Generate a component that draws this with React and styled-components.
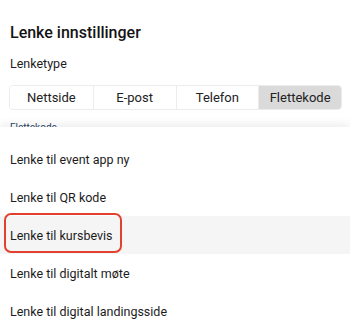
import React from 'react'
import styled, { createGlobalStyle } from 'styled-components'

const GlobalStyle = createGlobalStyle`
  body {
    margin: 0;
    background: #fff;
    font-family: Roboto, "Noto Sans", sans-serif;
    color: #1f1f1f;
  }
`

const Page = styled.div`
  position: relative;
  width: 350px;
  height: 330px;
  overflow: hidden;
  padding: 21px 8px 0 9px;
  box-sizing: border-box;
`

const Title = styled.h2`
  margin: 0 0 0 1px;
  font-size: 16px;
  font-weight: 500;
  line-height: 24px;
  color: #141414;
`

const Label = styled.div`
  margin: 10px 0 0 1px;
  font-size: 12.5px;
  line-height: 18px;
  color: #1c1c1c;
`

const Segmented = styled.div`
  margin-top: 12px;
  display: grid;
  grid-template-columns: repeat(4, 1fr);
  height: 25px;
  border: 1px solid #ececec;
  border-radius: 4px;
  box-sizing: border-box;
  overflow: hidden;
`

const Segment = styled.div`
  display: flex;
  align-items: center;
  justify-content: center;
  font-size: 13px;
  color: #222;
  background: ${p => (p.$active ? '#dadada' : '#fff')};
  border-left: ${p => (p.$first ? 'none' : '1px solid #ececec')};
`

const FieldLabel = styled.div`
  margin: 12px 0 0 1px;
  font-size: 10px;
  line-height: 12px;
  color: #2a3f66;
`

const Menu = styled.ul`
  position: absolute;
  left: 0;
  right: 0;
  top: 127px;
  bottom: 0;
  margin: 0;
  padding: 13px 0 0;
  list-style: none;
  background: #fff;
  box-shadow: 0 -3px 8px rgba(0, 0, 0, 0.07);
`

const Item = styled.li`
  position: relative;
  height: 38px;
  display: flex;
  align-items: center;
  padding-left: 10px;
  font-size: 12.5px;
  color: #1c1c1c;
  background: ${p => (p.$hover ? '#f5f5f5' : 'transparent')};
`

const Highlight = styled.span`
  position: absolute;
  left: 4px;
  top: -3px;
  width: 118px;
  height: 40px;
  border: 2px solid #e2412f;
  border-radius: 7px;
  box-sizing: border-box;
`

const types = ['Nettside', 'E-post', 'Telefon', 'Flettekode']
const options = [
  'Lenke til event app ny',
  'Lenke til QR kode',
  'Lenke til kursbevis',
  'Lenke til digitalt møte',
  'Lenke til digital landingsside',
]

export default function App() {
  return (
    <Page>
      <GlobalStyle />
      <Title>Lenke innstillinger</Title>
      <Label>Lenketype</Label>
      <Segmented>
        {types.map((t, i) => (
          <Segment key={t} $first={i === 0} $active={t === 'Flettekode'}>
            {t}
          </Segment>
        ))}
      </Segmented>
      <FieldLabel>Flettekode</FieldLabel>
      <Menu>
        {options.map(o => (
          <Item key={o} $hover={o === 'Lenke til kursbevis'}>
            {o === 'Lenke til kursbevis' && <Highlight />}
            {o}
          </Item>
        ))}
      </Menu>
    </Page>
  )
}
